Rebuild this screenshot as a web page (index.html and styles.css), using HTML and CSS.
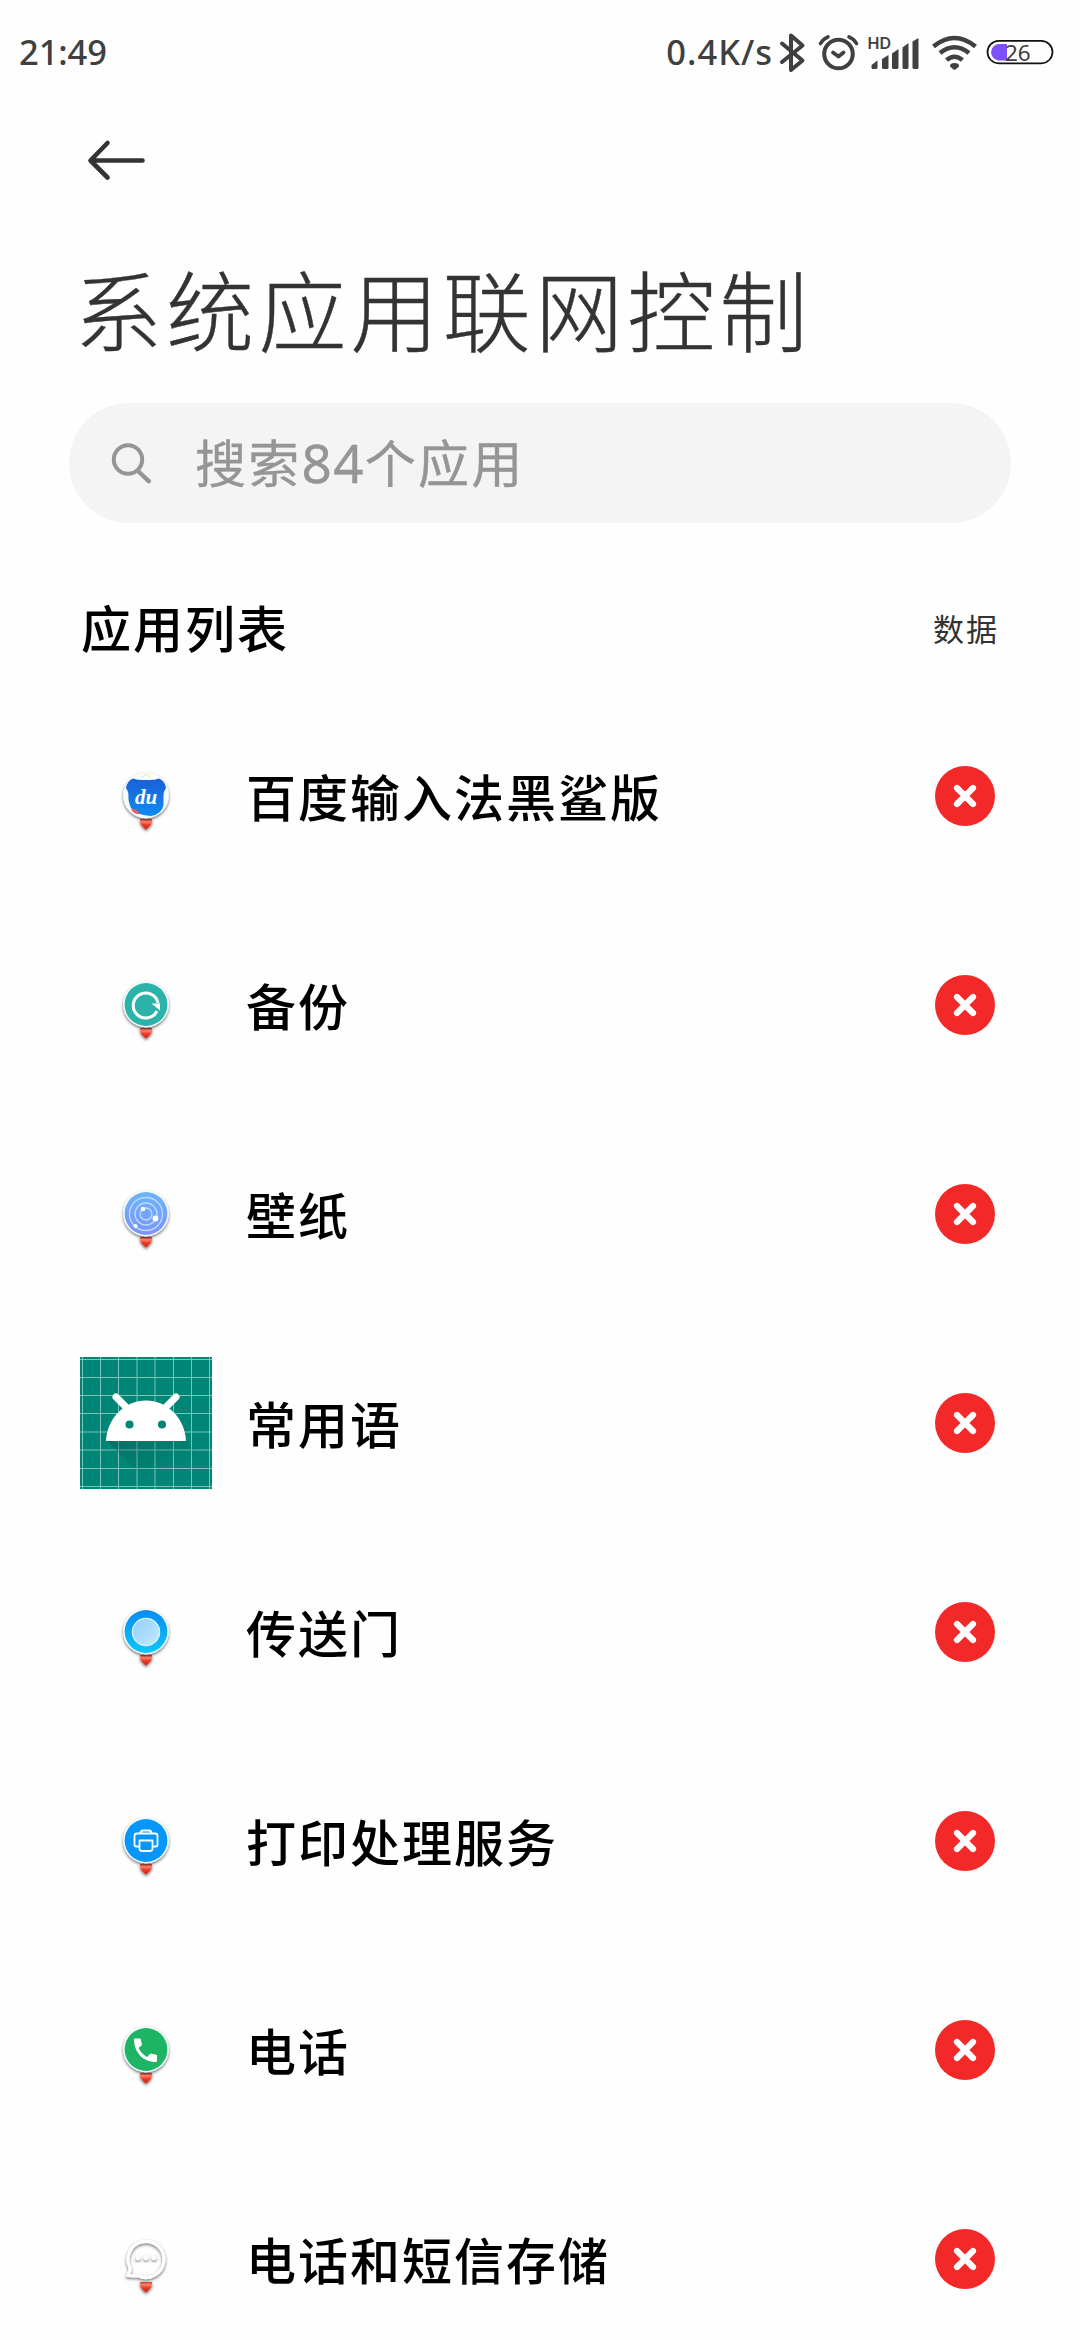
FILE: index.html
```
<!DOCTYPE html>
<html lang="zh-CN">
<head>
<meta charset="utf-8">
<title>系统应用联网控制</title>
<link rel="stylesheet" href="styles.css">
</head>
<body>
<svg class="defs" width="0" height="0" aria-hidden="true">
  <defs>
    <filter id="shadow" x="-30%" y="-30%" width="160%" height="170%"><feDropShadow dx="0" dy="1.500" stdDeviation="1.500" flood-color="#000" flood-opacity=".6"/></filter>
    <linearGradient id="heartFill" x1="0" y1="0" x2="0" y2="1"><stop offset="0" stop-color="#c8402e"/><stop offset=".25" stop-color="#ff8672"/><stop offset=".55" stop-color="#ee3a26"/><stop offset="1" stop-color="#c92312"/></linearGradient>
    <linearGradient id="duFill" x1="0" y1="0" x2="0" y2="1"><stop offset="0" stop-color="#1b5fd6"/><stop offset="1" stop-color="#0d8bf2"/></linearGradient>
    <linearGradient id="wallFill" x1="0" y1="0" x2="0" y2="1"><stop offset="0" stop-color="#6cb4fa"/><stop offset="1" stop-color="#7d93fd"/></linearGradient>
    <linearGradient id="portalFill" x1="0" y1="0" x2="0" y2="1"><stop offset="0" stop-color="#0a8bf0"/><stop offset="1" stop-color="#0cc6fb"/></linearGradient>
    <linearGradient id="lensFill" x1="0" y1="0" x2="1" y2="1"><stop offset="0" stop-color="#92ccfb"/><stop offset="1" stop-color="#c4ebff"/></linearGradient>
    <linearGradient id="longShadow" x1="0" y1="0" x2="1" y2="1"><stop offset="0" stop-color="#004d40" stop-opacity=".35"/><stop offset=".6" stop-color="#004d40" stop-opacity="0"/></linearGradient>
    <g id="heart" filter="url(#shadow)"><path d="M0 33.500C-3 30.500-6 28.500-6 25V23H6V25C6 28.500 3 30.500 0 33.500Z" fill="url(#heartFill)"/></g>
    <g id="base"><use href="#heart"/><circle cy="-.5" r="22.800" fill="#f4fffd" filter="url(#shadow)"/></g>
    <g id="block"><circle r="30" fill="#f32828"/><path d="M-8-8 8 8M8-8-8 8" stroke="#fff" stroke-width="6.200" stroke-linecap="round"/></g>
  </defs>
</svg>

<header class="status">
  <span class="clock">21:49</span>
  <span class="speed">0.4K/s</span>
  <svg class="tray" width="282" height="44" viewBox="774 29 282 44" fill="none" stroke="#404040">
    <path d="M782 42.500 802.500 59.500 791 69V34.500L802.500 44.500 782 61" stroke-width="4" stroke-linejoin="round" stroke-linecap="round"/>
    <circle cx="838.500" cy="53" r="14.300" stroke-width="4"/>
    <path d="M833 51.500 838.500 55.500 843.500 51.500" stroke-width="3.800" stroke-linecap="round" stroke-linejoin="round"/>
    <path d="M820.500 42.500Q823 38 828 35.800M849 35.800Q854 38 856.500 42.500" stroke-width="3.600" stroke-linecap="round"/>
    <path d="M871.500 65.500V64L877.500 59.500V66.500Q877.500 68 876 68H873Q871.500 68 871.500 66.500ZM882 67V58L888.500 54V67L887.500 68H883ZM892 67V52.500L898.500 48V67L897.500 68H893ZM902.500 67V46.500L908.500 42V67L907.500 68H903.500ZM912.500 67V40.500L918.500 37V67L917.500 68H913.500Z" fill="#404040" stroke="none"/>
    <text class="hd" x="867.500" y="48">HD</text>
    <path d="M933.500 45.500Q954.500 28.500 975.500 45.500M940 52Q954.500 40.500 969 52M946.500 59Q954.500 52.500 962.500 59" stroke-width="4.600"/>
    <path d="M950 65.500Q949.500 62 954.500 62T959 65.500L955.500 68.500Q954.500 69 953.500 68.500Z" fill="#404040" stroke="none"/>
    <path d="M1007 43H998.500A8.300 8.300 0 0 0 998.500 59.500H1007Z" fill="#7c50fb" stroke="none"/>
    <rect x="987.500" y="39.800" width="65" height="22.500" rx="11.250" stroke="#111" stroke-width="1.700"/>
    <text class="level" x="1005" y="59.500">26</text>
  </svg>
</header>

<nav class="nav">
  <svg width="60" height="42" viewBox="86 139 60 42"><path d="M142.500 160.500H91M107.500 143 90.500 160.500 107.500 177.500" fill="none" stroke="#333" stroke-width="4.600" stroke-linecap="round" stroke-linejoin="round"/></svg>
</nav>

<h1 class="title">系统应用联网控制</h1>

<div class="search">
  <svg width="42" height="42" viewBox="110 442 42 42"><path d="M138 471 148.700 481.200" stroke="#959595" stroke-width="4.400" stroke-linecap="round"/><circle cx="128" cy="459.500" r="14.200" fill="none" stroke="#959595" stroke-width="4"/></svg>
  <span class="hint">搜索<span class="count">84</span>个应用</span>
</div>

<div class="section">
  <h2 class="section-title">应用列表</h2>
  <span class="section-col">数据</span>
</div>

<ul class="list">
  <li class="row">
    <svg class="icon" viewBox="-66 -66 132 132"><use href="#base"/>
      <path d="M-5-18 0-22 5-18" fill="none" stroke="#f5dfaa" stroke-width="1"/>
      <path d="M-13-17.500Q-8-15.500 0-16Q8-15.500 13-17.500Q19-15 20-8Q17-4 17.500 0V9Q16 18 5 20Q-9 19-15 12Q-18 5-17.500 0Q-17-4-20-8Q-19-15-13-17.500Z" fill="url(#duFill)"/>
      <path d="M-15 13Q-10 12-6 18Q-12 19-15 13Z" fill="#ec5966"/>
      <text class="du" x="0" y="8">du</text></svg>
    <span class="name">百度输入法黑鲨版</span>
    <svg class="toggle" viewBox="-30 -30 60 60"><use href="#block"/></svg>
  </li>
  <li class="row">
    <svg class="icon" viewBox="-66 -66 132 132"><use href="#base"/>
      <circle cy="-.5" r="21.400" fill="#2bb3a9"/>
      <path d="M12-2A12.500 12.500 0 1 0 11 6" fill="none" stroke="#fff" stroke-width="3"/><path d="M5.500-1.500H14V5.500Z" fill="#fff"/></svg>
    <span class="name">备份</span>
    <svg class="toggle" viewBox="-30 -30 60 60"><use href="#block"/></svg>
  </li>
  <li class="row">
    <svg class="icon" viewBox="-66 -66 132 132"><use href="#base"/>
      <circle cy="-.5" r="21.400" fill="url(#wallFill)"/>
      <g fill="none" stroke="#bcdcff" stroke-width="1.300"><circle r="6"/><circle r="11"/><circle r="16.500"/></g>
      <g fill="#fff"><circle cx="-3" cy="-5" r="2.300"/><circle cx="9.500" cy="4.500" r="2.900"/><circle cx="-10.500" cy="12" r="2"/></g></svg>
    <span class="name">壁纸</span>
    <svg class="toggle" viewBox="-30 -30 60 60"><use href="#block"/></svg>
  </li>
  <li class="row">
    <svg class="icon" viewBox="0 0 132 132"><rect width="132" height="132" fill="#008577"/>
      <path d="M2.500 0V132M20.500 0V132M38.500 0V132M57 0V132M75 0V132M93.500 0V132M111.500 0V132M129.500 0V132M0 2.500H132M0 20.500H132M0 38.500H132M0 56.500H132M0 75H132M0 93H132M0 111.500H132M0 129.500H132" stroke="#7fc2bb" stroke-width="1"/>
      <path d="M27 84H106L132 110V132H75Z" fill="url(#longShadow)"/>
      <path d="M26 84C27 61 45 43.500 66 43.500S105 61 106 84Z" fill="#fff"/>
      <path d="M36 40 47 51M96 40 85 51" stroke="#fff" stroke-width="7" stroke-linecap="round"/>
      <g fill="#008577"><circle cx="49.500" cy="67.500" r="4"/><circle cx="82" cy="67.500" r="4"/></g></svg>
    <span class="name">常用语</span>
    <svg class="toggle" viewBox="-30 -30 60 60"><use href="#block"/></svg>
  </li>
  <li class="row">
    <svg class="icon" viewBox="-66 -66 132 132"><use href="#base"/>
      <circle cy="-.5" r="21.400" fill="url(#portalFill)"/><circle r="13.600" fill="url(#lensFill)" stroke="#d8f5ff" stroke-width="1.300"/></svg>
    <span class="name">传送门</span>
    <svg class="toggle" viewBox="-30 -30 60 60"><use href="#block"/></svg>
  </li>
  <li class="row">
    <svg class="icon" viewBox="-66 -66 132 132"><use href="#base"/>
      <circle cy="-.5" r="21.400" fill="#0797fb"/>
      <g fill="none" stroke="#fff" stroke-width="1.800" stroke-linejoin="round"><path d="M-6.500 5.500H-10Q-11.500 5.500-11.500 4V-5Q-11.500-7.500-9-7.500H9Q11.500-7.500 11.500-5V4Q11.500 5.500 10 5.500H6.500M-5.500-7.500Q-5.500-10.500-3-10.500H3Q5.500-10.500 5.500-7.500M-6.500-.5H6.500V7.500Q6.500 10 4 10H-4Q-6.500 10-6.500 7.500Z"/></g></svg>
    <span class="name">打印处理服务</span>
    <svg class="toggle" viewBox="-30 -30 60 60"><use href="#block"/></svg>
  </li>
  <li class="row">
    <svg class="icon" viewBox="-66 -66 132 132"><use href="#base"/>
      <circle cy="-.5" r="21.400" fill="#1db464"/>
      <path d="M-12-10.500Q-12-11.500-11-11.500H-5.500L-4-5-7.500-2Q-4.500 4 1 7L4.500 3.500 11 5V10.500Q11 12 9.500 12C-3 12-12 2-12-10.500Z" fill="#fff"/></svg>
    <span class="name">电话</span>
    <svg class="toggle" viewBox="-30 -30 60 60"><use href="#block"/></svg>
  </li>
  <li class="row">
    <svg class="icon" viewBox="-66 -66 132 132"><use href="#heart"/>
      <path d="M-7.500 16.900-18.500 16.500Q-16-13-16 8.800A18 18 0 1 1-7.500 16.900Z" fill="none" stroke="none"/>
      <path d="M-7.500 16.900-18.500 16.500Q-15.500 13-16 8.800A18 18 0 1 1-7.500 16.900Z" fill="none" stroke="#fff" stroke-width="3" stroke-linejoin="round" filter="url(#shadow)"/>
      <g fill="#fff" filter="url(#shadow)"><circle cx="-8" cy="-1" r="2.300"/><circle cy="-1" r="2.300"/><circle cx="8" cy="-1" r="2.300"/></g></svg>
    <span class="name">电话和短信存储</span>
    <svg class="toggle" viewBox="-30 -30 60 60"><use href="#block"/></svg>
  </li>
</ul>
</body>
</html>
```
FILE: styles.css
```
* { box-sizing: border-box; margin: 0; padding: 0; }

body {
  width: 1080px;
  height: 2340px;
  overflow: hidden;
  background: #fefefe;
  color: #000;
  font-family: "Noto Sans CJK SC", sans-serif;
}

.defs { display: block; height: 0; }
svg { flex: none; }

.status {
  display: flex;
  align-items: center;
  height: 104px;
  padding: 0 24px 0 19px;
  color: #404040;
  font: 500 34.500px/44px "Noto Sans", sans-serif;
}
.clock { letter-spacing: -0.1px; }
.speed { margin-left: auto; margin-right: 1px; letter-spacing: 1px; }
.hd { font: 600 16px Inter, sans-serif; fill: #404040; stroke: none; }
.level { font: 400 22.500px "Noto Sans", sans-serif; fill: #404040; stroke: none; }

.nav {
  display: flex;
  align-items: center;
  height: 112px;
  padding-left: 86px;
}

.title {
  height: 187px;
  padding: 27px 0 0 74px;
  font-size: 88px;
  font-weight: 300;
  line-height: 128px;
  letter-spacing: 4.200px;
  color: #333;
  -webkit-text-stroke: .4px #333;
}

.search {
  display: flex;
  align-items: center;
  gap: 43px;
  width: 942px;
  height: 120px;
  margin-left: 69px;
  padding-left: 41px;
  border-radius: 60px;
  background: #f4f4f4;
}
.hint {
  margin-top: -2px;
  font-size: 51px;
  line-height: 76px;
  letter-spacing: 2.300px;
  color: #959595;
  -webkit-text-stroke: .4px #959595;
}
.count { font-family: "Noto Sans", sans-serif; font-size: 53px; letter-spacing: 1.200px; }

.section {
  display: flex;
  align-items: center;
  justify-content: space-between;
  height: 168.500px;
  padding: 41px 81px 0 81px;
}
.section-title { margin-top: -3px; font-size: 50px; font-weight: 500; line-height: 76px; letter-spacing: 2px; }
.section-col { font-size: 31px; line-height: 46px; letter-spacing: 2px; color: #333; }

.list { list-style: none; }
.row {
  display: flex;
  align-items: center;
  height: 209px;
  padding: 0 85px 0 80px;
}
.icon { width: 132px; height: 132px; }
.du { font: italic 700 21px "Liberation Serif", serif; fill: #fff; text-anchor: middle; }
.name {
  flex: 1;
  margin-top: -3px;
  padding-left: 34px;
  font-size: 50px;
  font-weight: 500;
  line-height: 76px;
  letter-spacing: 2px;
}
.toggle { width: 60px; height: 60px; }
```
